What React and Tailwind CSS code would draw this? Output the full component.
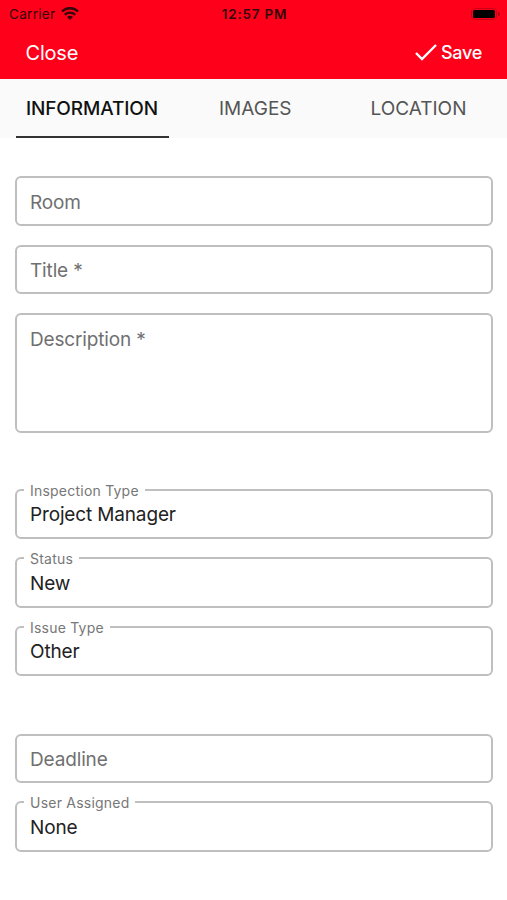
import React from 'react';

const tabs = [
  { name: 'INFORMATION', width: 'w-[153px]', active: true },
  { name: 'IMAGES', width: 'w-[153px]' },
  { name: 'LOCATION', width: 'w-[153px]' },
];

const Field = ({ label, value, className = 'h-[49.5px]' }) => {
  if (value) {
    return (
      <fieldset className="h-[55.5px] rounded-[6px] border-2 border-[#bfbfbf] pl-[7px]">
        <legend className="h-[12px] px-[6px] pt-px text-[14px] leading-[12px] tracking-[0.22px] text-[#777]">
          {label}
        </legend>
        <div className="pt-[7.5px] pl-[6px] text-[19px] leading-6 tracking-[-0.15px] text-[#222]">{value}</div>
      </fieldset>
    );
  }

  return (
    <div className={`rounded-[6px] border-2 border-[#bfbfbf] px-[13px] pt-[12.5px] text-[19px] leading-6 tracking-[-0.15px] text-[#707070] ${className}`}>
      {label}
    </div>
  );
};

const App = () => {
  return (
    <div className="h-[900px] w-[507px] overflow-hidden bg-white font-['Inter',sans-serif]">
      <header className="h-[79px] bg-[#ff001a]">
        <div className="grid h-[28px] grid-cols-3 items-center pr-[7px] pl-[9px] text-[13.5px] text-[#35060b]">
          <div className="flex items-center gap-[6px]">
            <span className="tracking-[0.3px]">Carrier</span>
            <svg className="mb-[2px]" width="18" height="13" viewBox="0 0 18 13" fill="none" stroke="currentColor" strokeWidth="2.4">
              <path d="M1 4.5a11.3 11.3 0 0 1 16 0M3.8 7.8a7.4 7.4 0 0 1 10.4 0" />
              <path d="M6 10.1a4.3 4.3 0 0 1 6 0L9 13z" fill="currentColor" stroke="none" />
            </svg>
          </div>
          <span className="text-center font-semibold tracking-[0.8px] whitespace-nowrap">12:57 PM</span>
          <svg className="mb-px justify-self-end" width="29" height="12" viewBox="0 0 29 12">
            <rect x="0.5" y="0.5" width="25" height="11" rx="3" fill="none" stroke="#c90315" />
            <rect x="2" y="2" width="22" height="8" rx="1.5" fill="#000" />
            <path d="M27 4a2 2 0 0 1 0 4z" fill="#a90513" />
          </svg>
        </div>
        <div className="flex h-[49px] items-center justify-between pr-[25px] pl-[25.5px] text-white">
          <button className="text-[20px] tracking-[-0.2px]">Close</button>
          <button className="flex items-center gap-1 text-[18px] font-medium tracking-[-0.3px]">
            <svg width="22" height="17" viewBox="0 0 22 17" fill="none" stroke="currentColor" strokeWidth="2.4">
              <path d="M1 9l6 6L21 1" />
            </svg>
            Save
          </button>
        </div>
      </header>

      <nav className="flex h-[58.5px] justify-between bg-[#fafafa] pr-[12px] pl-[15.5px]">
        {tabs.map((tab) => (
          <button
            key={tab.name}
            className={`${tab.width} border-b-2 pt-[4px] text-[19px] ${tab.active ? 'border-[#333] font-medium tracking-[-0.1px] text-[#111]' : 'border-transparent text-[#555]'}`}
          >
            {tab.name}
          </button>
        ))}
      </nav>

      <main className="pt-[38.5px] pr-[14px] pl-[15px]">
        <div className="flex flex-col gap-[19px]">
          <Field label="Room" />
          <Field label="Title *" />
          <Field label="Description *" className="h-[119.5px]" />
        </div>
        <div className="mt-[51px] flex flex-col gap-[13px]">
          <Field label="Inspection Type" value="Project Manager" />
          <Field label="Status" value="New" />
          <Field label="Issue Type" value="Other" />
        </div>
        <div className="mt-[57.5px] flex flex-col gap-[13px]">
          <Field label="Deadline" />
          <Field label="User Assigned" value="None" />
        </div>
      </main>
    </div>
  );
};

export default App;
